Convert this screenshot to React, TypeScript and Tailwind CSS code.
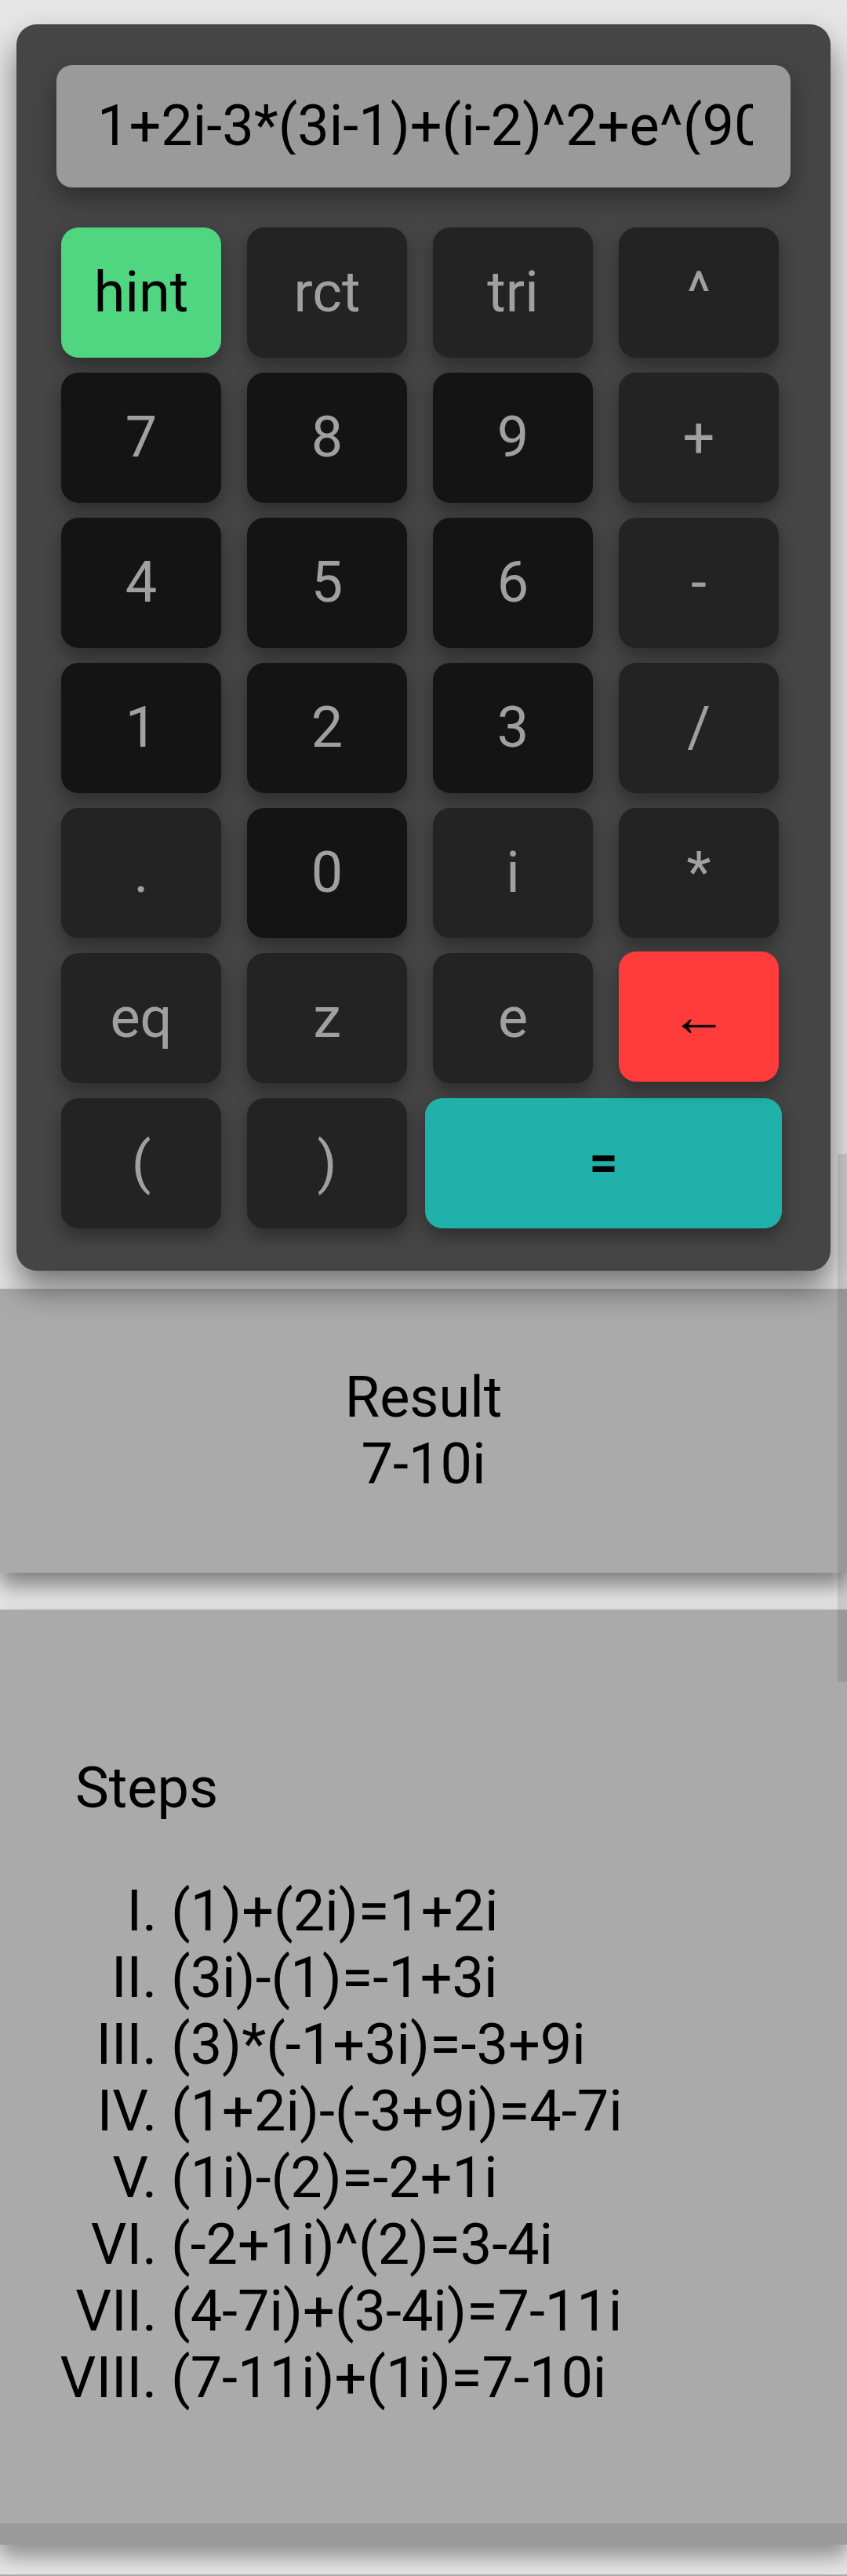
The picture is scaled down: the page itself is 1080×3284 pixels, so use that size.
import React from "react";

type Key = {
  label: string;
  tone: "num" | "fn" | "hint" | "del" | "eq";
  wide?: boolean;
};

const keys: Key[] = [
  { label: "hint", tone: "hint" },
  { label: "rct", tone: "fn" },
  { label: "tri", tone: "fn" },
  { label: "^", tone: "fn" },
  { label: "7", tone: "num" },
  { label: "8", tone: "num" },
  { label: "9", tone: "num" },
  { label: "+", tone: "fn" },
  { label: "4", tone: "num" },
  { label: "5", tone: "num" },
  { label: "6", tone: "num" },
  { label: "-", tone: "fn" },
  { label: "1", tone: "num" },
  { label: "2", tone: "num" },
  { label: "3", tone: "num" },
  { label: "/", tone: "fn" },
  { label: ".", tone: "fn" },
  { label: "0", tone: "num" },
  { label: "i", tone: "fn" },
  { label: "*", tone: "fn" },
  { label: "eq", tone: "fn" },
  { label: "z", tone: "fn" },
  { label: "e", tone: "fn" },
  { label: "←", tone: "del" },
  { label: "(", tone: "fn" },
  { label: ")", tone: "fn" },
  { label: "=", tone: "eq", wide: true },
];

const toneClass: Record<Key["tone"], string> = {
  num: "bg-[#141414] text-[#a0a0a0] text-[72px]",
  fn: "bg-[#232323] text-[#a0a0a0] text-[72px]",
  hint: "bg-[#50d680] text-black text-[72px]",
  del: "bg-[#ff3b3b] text-black text-[72px] -translate-y-[2px]",
  eq: "bg-[#20b2aa] text-black text-[64px] font-bold col-span-2 -ml-[10px] -mr-[4px]",
};

const steps = [
  "(1)+(2i)=1+2i",
  "(3i)-(1)=-1+3i",
  "(3)*(-1+3i)=-3+9i",
  "(1+2i)-(-3+9i)=4-7i",
  "(1i)-(2)=-2+1i",
  "(-2+1i)^(2)=3-4i",
  "(4-7i)+(3-4i)=7-11i",
  "(7-11i)+(1i)=7-10i",
];

export default function App() {
  return (
    <div className="relative min-h-screen overflow-hidden bg-[#e6e6e6] pt-[31px] font-['Roboto','Liberation_Sans',sans-serif]">
      {/* Calculator */}
      <div className="relative z-10 mx-[21px] rounded-[26px] bg-[#454545] px-[51px] pt-[52px] pb-[54px] shadow-[0_22px_40px_rgba(0,0,0,0.5)]">
        <div className="flex h-[156px] items-center rounded-[20px] bg-[#9a9a9a] pl-[52px] pr-[48px] shadow-[0_14px_30px_rgba(0,0,0,0.35)]">
          <div className="min-w-0 flex-1 overflow-hidden">
            <span className="block whitespace-nowrap text-[72px] leading-none text-black">
              1+2i-3*(3i-1)+(i-2)^2+e^(90i)
            </span>
          </div>
        </div>

        <div className="mt-[51px] grid grid-cols-[repeat(4,204px)] gap-x-[33px] gap-y-[19px] pl-[6px]">
          {keys.map((k) => (
            <button
              key={k.label}
              className={`flex h-[166px] items-center justify-center rounded-[22px] leading-none shadow-[0_10px_22px_rgba(0,0,0,0.35)] ${toneClass[k.tone]}`}
            >
              {k.label}
            </button>
          ))}
        </div>
      </div>

      {/* Result */}
      <div className="mt-[23px] bg-[#aaaaaa] py-[96px] text-center text-[72px] leading-[85px] text-black shadow-[0_16px_26px_rgba(0,0,0,0.45)]">
        <p>Result</p>
        <p>7-10i</p>
      </div>

      {/* Steps */}
      <div className="mt-[47px] border-b-[27px] border-[#9b9b9b] bg-[#aaaaaa] px-[96px] pt-[185px] pb-[143px] text-[72px] leading-[85px] text-black shadow-[0_14px_26px_rgba(0,0,0,0.4)]">
        <p>Steps</p>
        <ol className="mt-[72px] list-[upper-roman] pl-[122px]">
          {steps.map((s) => (
            <li key={s}>{s}</li>
          ))}
        </ol>
      </div>

      <div className="mt-[38px] h-[40px] bg-[#aaaaaa]" />

      {/* overlay scrollbar thumb */}
      <div className="absolute right-0 top-[1471px] h-[673px] w-[12px] bg-black/10" />
    </div>
  );
}
